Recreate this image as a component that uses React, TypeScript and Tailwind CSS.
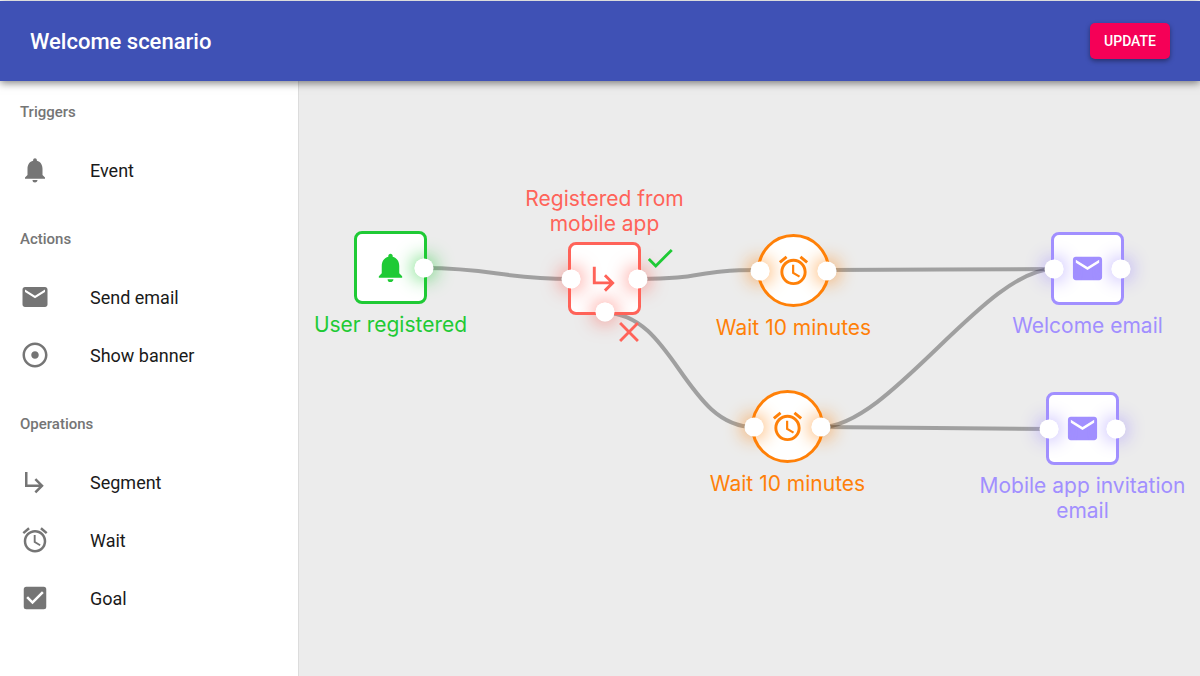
import type { ReactNode } from "react";
import type { IconType } from "react-icons";
import {
  MdAccessAlarm,
  MdAdjust,
  MdCheck,
  MdCheckBox,
  MdClose,
  MdEmail,
  MdNotifications,
  MdSubdirectoryArrowRight,
} from "react-icons/md";

type PaletteItem = { label: string; icon: IconType };
type PaletteGroup = { title: string; items: PaletteItem[] };

const palette: PaletteGroup[] = [
  { title: "Triggers", items: [{ label: "Event", icon: MdNotifications }] },
  {
    title: "Actions",
    items: [
      { label: "Send email", icon: MdEmail },
      { label: "Show banner", icon: MdAdjust },
    ],
  },
  {
    title: "Operations",
    items: [
      { label: "Segment", icon: MdSubdirectoryArrowRight },
      { label: "Wait", icon: MdAccessAlarm },
      { label: "Goal", icon: MdCheckBox },
    ],
  },
];

// Horizontal reach of the bezier handles of every connection.
const CURVE = 69;

type Edge = { from: [number, number]; to: [number, number] };

const edges: Edge[] = [
  { from: [125, 187], to: [272, 198] },
  { from: [340, 198], to: [461, 189] },
  { from: [306, 232], to: [455, 346] },
  { from: [528, 189], to: [755, 188] },
  { from: [522, 346], to: [755, 188] },
  { from: [522, 346], to: [750, 348] },
];

function edgePath({ from, to }: Edge) {
  return `M${from[0]} ${from[1]}C${from[0] + CURVE} ${from[1]} ${to[0] - CURVE} ${to[1]} ${to[0]} ${to[1]}`;
}

const portSides = {
  left: "top-1/2 left-[3px] -translate-x-1/2 -translate-y-1/2",
  right: "top-1/2 right-[3px] translate-x-1/2 -translate-y-1/2",
  bottom: "bottom-[3px] left-1/2 -translate-x-1/2 translate-y-1/2",
};

type NodeProps = {
  label: string;
  icon: IconType;
  place: string;
  color: string;
  round?: boolean;
  labelAbove?: boolean;
  ports: (keyof typeof portSides)[];
  children?: ReactNode;
};

function FlowNode({ label, icon: Icon, place, color, round, labelAbove, ports, children }: NodeProps) {
  return (
    <div className={`absolute size-[73px] ${place} ${color}`}>
      <div
        className={`flex size-full items-center justify-center border-3 border-current bg-white ${
          round ? "rounded-full" : "rounded-lg"
        }`}
      >
        <Icon className="size-[35px]" />
      </div>
      {ports.map((side) => (
        <span key={side} className={`absolute size-[19px] rounded-full ${portSides[side]}`}>
          <span className="absolute inset-0 rounded-full shadow-[0_0_20px_currentColor]" />
          <span className="absolute inset-0 rounded-full bg-white" />
        </span>
      ))}
      <p
        className={`absolute left-1/2 w-[220px] -translate-x-1/2 text-center font-['Inter',sans-serif] text-[21px] leading-[25px] ${
          labelAbove ? "bottom-full mb-[6px]" : "top-full mt-2"
        }`}
      >
        {label}
      </p>
      {children}
    </div>
  );
}

export default function App() {
  return (
    <div className="flex min-h-screen flex-col bg-white font-['Roboto',sans-serif]">
      <header className="relative z-10 mt-px flex h-20 items-center justify-between bg-[#3f51b5] px-[30px] text-white shadow-[0_2px_8px_rgba(0,0,0,0.5)]">
        <h1 className="text-[22px] font-medium">Welcome scenario</h1>
        <button
          type="button"
          className="h-9 rounded-[5px] bg-[#f50057] px-[14px] text-[14px] font-medium uppercase shadow-[0_2px_5px_rgba(0,0,0,0.4)]"
        >
          Update
        </button>
      </header>
      <div className="flex flex-1">
        <nav className="flex w-[299px] shrink-0 flex-col gap-[10px] border-r border-[#dcdcdc] bg-white pt-px">
          {palette.map((group) => (
            <section key={group.title}>
              <h2 className="flex h-[59px] items-center px-5 pt-[2px] text-[15px] font-medium text-[#757575]">
                {group.title}
              </h2>
              <ul>
                {group.items.map(({ label, icon: Icon }) => (
                  <li key={label}>
                    <button
                      type="button"
                      className="flex h-[58px] w-full items-center gap-10 px-5 text-left text-[18px] text-[#1a1a1a]"
                    >
                      <Icon className="size-[30px] text-[#757575]" />
                      {label}
                    </button>
                  </li>
                ))}
              </ul>
            </section>
          ))}
        </nav>
        <main className="relative flex-1 overflow-hidden bg-[#ececec]">
          <svg className="absolute inset-0 size-full" fill="none" stroke="#000" strokeOpacity="0.32" strokeWidth="4">
            {edges.map((edge) => (
              <path key={edgePath(edge)} d={edgePath(edge)} />
            ))}
          </svg>
          <FlowNode
            label="User registered"
            icon={MdNotifications}
            place="left-[55px] top-[150px]"
            color="text-[#1fca35]"
            ports={["right"]}
          />
          <FlowNode
            label="Registered from mobile app"
            icon={MdSubdirectoryArrowRight}
            place="left-[269px] top-[161px]"
            color="text-[#ff6359]"
            labelAbove
            ports={["left", "right", "bottom"]}
          >
            <MdCheck className="absolute -top-[1px] left-[75px] size-[34px] text-[#1fca35]" />
            <MdClose className="absolute top-[73px] left-[44px] size-[34px]" />
          </FlowNode>
          <FlowNode
            label="Wait 10 minutes"
            icon={MdAccessAlarm}
            place="left-[458px] top-[153px]"
            color="text-[#ff8008]"
            round
            ports={["left", "right"]}
          />
          <FlowNode
            label="Wait 10 minutes"
            icon={MdAccessAlarm}
            place="left-[452px] top-[309px]"
            color="text-[#ff8008]"
            round
            ports={["left", "right"]}
          />
          <FlowNode
            label="Welcome email"
            icon={MdEmail}
            place="left-[752px] top-[151px]"
            color="text-[#a18fff]"
            ports={["left", "right"]}
          />
          <FlowNode
            label="Mobile app invitation email"
            icon={MdEmail}
            place="left-[747px] top-[311px]"
            color="text-[#a18fff]"
            ports={["left", "right"]}
          />
        </main>
      </div>
    </div>
  );
}
